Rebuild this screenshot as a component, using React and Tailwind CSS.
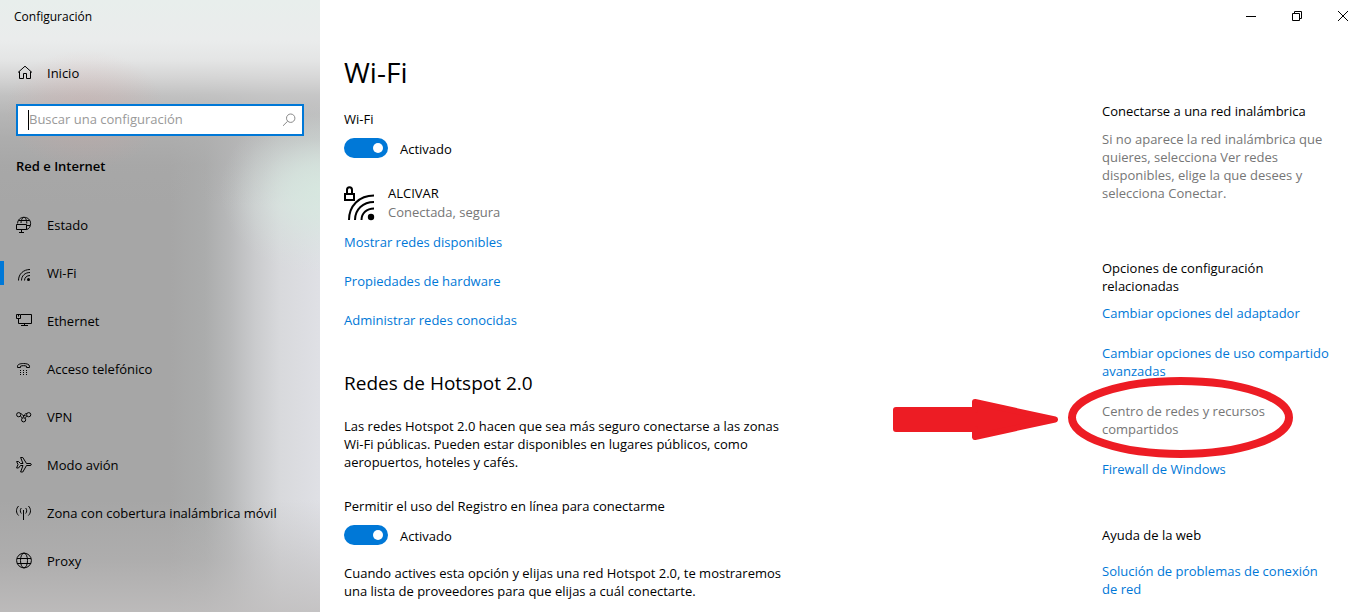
import React, { useState } from "react";

const navItems = [
  { label: "Estado", icon: StatusIcon },
  { label: "Wi-Fi", icon: WifiIcon, active: true },
  { label: "Ethernet", icon: EthernetIcon },
  { label: "Acceso telefónico", icon: DialUpIcon },
  { label: "VPN", icon: VpnIcon },
  { label: "Modo avión", icon: PlaneIcon },
  { label: "Zona con cobertura inalámbrica móvil", icon: HotspotIcon },
  { label: "Proxy", icon: GlobeIcon },
];

function Icon({ children }) {
  return (
    <svg
      viewBox="0 0 16 16"
      className="size-4 shrink-0 overflow-visible"
      fill="none"
      stroke="currentColor"
      aria-hidden="true"
    >
      {children}
    </svg>
  );
}

function HomeIcon() {
  return (
    <Icon>
      <path d="M2 7.5L9 1.2L16 7.5M3.5 6.5V13.5H7.5V8.5H10.5V13.5H14.5V6.5" />
    </Icon>
  );
}

function StatusIcon() {
  return (
    <Icon>
      <path d="M1.6 6.5C1.6 2.8 4.5 .3 8 .3C11.8 .3 14.6 3 14.6 6.5C14.6 9.8 13 12 10.5 12.6M3 3.5H13.5M10.5 8.5H14M5 6C5 3.5 6 1 7.5.4M8.5.4C10.2 1.5 10.8 4 10.8 6.5" />
      <path d="M.5 7.5H10.5V12.5H.5ZM5.5 12.5V15M3 15.5H8" />
    </Icon>
  );
}

function WifiIcon() {
  return (
    <Icon>
      <path d="M2.5 15.5C2.5 9 7.5 4.5 14 4.5M5.5 15.5C5.5 10.8 9 7.5 14 7.5M8.5 15.5C8.5 12.5 10.8 10.5 14 10.5" />
      <circle cx="12.5" cy="14.5" r="1.5" fill="currentColor" stroke="none" />
    </Icon>
  );
}

function EthernetIcon() {
  return (
    <Icon>
      <path d="M5 1.5H15.5V10.5H2.5V5.5M.5 1.5H4.5V5.5H.5ZM2.5 1.5V3.5M8.5 10.5V12.5M5 12.5H12" />
    </Icon>
  );
}

function DialUpIcon() {
  return (
    <Icon>
      <path d="M1.5 6.5V5.2C1.5 3.4 4.3 2.5 7.5 2.5S13.5 3.4 13.5 5.2V6.5H10.5V5.2C9 4.5 6 4.5 4.5 5.2V6.5Z" />
      <path d="M4 9.5H5M7 9.5H8M10 9.5H11M4 11.5H5M7 11.5H8M10 11.5H11M4 13.5H5M7 13.5H8M10 13.5H11" />
    </Icon>
  );
}

function VpnIcon() {
  return (
    <Icon>
      <circle cx="2.7" cy="5.7" r="2.1" />
      <circle cx="12.7" cy="5.7" r="2.1" />
      <circle cx="7.6" cy="10.8" r="2.1" />
      <path d="M4.5 4.5C6 4.5 7 7.8 9.5 6.5M4.5 7C5.5 7.5 5.5 8.5 6 9.2M10.8 4.5C8.5 4.5 8.8 6 7 8.2M11 7C9.5 7.5 9.8 8.5 9.3 9.4" />
    </Icon>
  );
}

function PlaneIcon() {
  return (
    <Icon>
      <path d="M.6 4.5H2.5L4.5 6.5H7L4.6.5H6.8L10.5 6.5H14C15.8 6.5 15.8 8.5 14 8.5H10.5L6.8 15H4.6L7 8.5H4.5L2.5 11H.6L2 7.5Z" />
    </Icon>
  );
}

function HotspotIcon() {
  return (
    <Icon>
      <path d="M7.5 5V15M5.3 3C4 4.5 4 7 5.3 8.5M9.7 3C11 4.5 11 7 9.7 8.5M2.6 1C-.2 3.7 -.2 7.8 2.6 10.5M12.4 1C15.2 3.7 15.2 7.8 12.4 10.5" />
    </Icon>
  );
}

function GlobeIcon() {
  return (
    <Icon>
      <circle cx="8" cy="7.5" r="7.4" />
      <ellipse cx="8" cy="7.5" rx="3.5" ry="7.4" />
      <path d="M1 5.5H15M1 10.5H15" />
    </Icon>
  );
}

function SecureWifiIcon() {
  return (
    <svg viewBox="0 0 32 36" className="h-9 w-8 shrink-0" fill="none" stroke="currentColor" strokeWidth="2" aria-hidden="true">
      <path d="M1 8H10V14H1ZM3 8V4C3 .3 8 .3 8 4V8" />
      <path d="M5 34C5 20 15 9.5 30 9.5M11 34C11 23.5 19 16 30 16M17.5 34C17.5 27.5 22.5 22.5 30 22.5" />
      <circle cx="27" cy="31" r="3.2" fill="currentColor" stroke="none" />
    </svg>
  );
}

function Toggle({ id }) {
  const [on, setOn] = useState(true);

  return (
    <div className="flex items-center gap-3">
      <input
        id={id}
        type="checkbox"
        checked={on}
        onChange={() => setOn(!on)}
        className="flex h-5 w-11 appearance-none items-center rounded-full bg-gray-500 px-[5px] before:size-[10px] before:rounded-full before:bg-white checked:justify-end checked:bg-[#0078d7]"
      />
      <label htmlFor={id} className="pt-[2px]">
        {on ? "Activado" : "Desactivado"}
      </label>
    </div>
  );
}

function TextLink({ children, className = "text-[#0078d7]" }) {
  return (
    <a href="#" className={`block ${className}`}>
      {children}
    </a>
  );
}

function Sidebar() {
  return (
    <aside className="w-80 shrink-0 bg-[#a6a6a6] bg-[radial-gradient(ellipse_100px_85px_at_320px_190px,#d6e8dfe6_0%,#d6e8dfb3_30%,#d6e8df4d_60%,#d6e8df14_85%,#d6e8df00_100%),radial-gradient(ellipse_80px_60px_at_85px_110px,#d8a09c40_0%,#d8a09c26_50%,#d8a09c00_100%),linear-gradient(to_bottom,#e8eeec_0px,#eaecec_40px,#e4e5e5_60px,#d6d6d6f5_78px,#c4c4c4eb_95px,#b8b8b8d9_115px,#b0b0b0a6_140px,#aaaaaa59_165px,#a8a8a800_205px,#b8b6b600_500px,#bab8b866_560px,#c0bebed9_612px),linear-gradient(to_right,#a6a6a6_170px,#abacac_205px,#b8b9ba_230px,#cacbcd_255px,#d8d9dc_280px,#dfe0e5_320px)]">
      <div className="px-[14px] pt-2 text-xs leading-[18px]">Configuración</div>
      <a href="#" className="mt-[38px] flex items-center gap-[15px] px-4 leading-[18px]">
        <HomeIcon />
        Inicio
      </a>
      <div className="mx-4 mt-[22px] flex h-8 items-center border-2 border-[#0078d7] bg-white pr-[6px] pl-[10px]">
        <span className="h-5 w-px bg-black" />
        <input
          type="text"
          aria-label="Buscar una configuración"
          placeholder="Buscar una configuración"
          className="min-w-0 flex-1 outline-none placeholder:text-[#999]"
        />
        <svg viewBox="0 0 14 14" className="size-[14px]" fill="none" stroke="#888" aria-hidden="true">
          <circle cx="8.7" cy="5.2" r="4.2" />
          <path d="M5.7 8.2L1 12.8" />
        </svg>
      </div>
      <h2 className="mt-[21px] px-4 leading-[18px] font-semibold">Red e Internet</h2>
      <nav className="mt-[26px]">
        {navItems.map(({ label, icon: NavIcon, active }) => (
          <a key={label} href="#" className="flex h-12 items-center">
            <span className={active ? "h-6 w-1 bg-[#0078d7]" : "h-6 w-1"} />
            <span className="flex items-center gap-[15px] pl-3">
              <NavIcon />
              <span className="pt-[2px]">{label}</span>
            </span>
          </a>
        ))}
      </nav>
    </aside>
  );
}

function WindowButtons() {
  return (
    <div className="flex h-8 justify-end gap-3">
      <button aria-label="Minimizar" className="flex w-[34px] items-center justify-center">
        <svg viewBox="0 0 10 10" className="size-[10px]" stroke="currentColor">
          <path d="M0 5.5H10" />
        </svg>
      </button>
      <button aria-label="Restaurar" className="flex w-[34px] items-center justify-center">
        <svg viewBox="0 0 10 10" className="size-[10px]" fill="none" stroke="currentColor">
          <path d="M.5 2.5H7.5V9.5H.5ZM2.5 2.5V.5H9.5V7.5H7.5" />
        </svg>
      </button>
      <button aria-label="Cerrar" className="flex w-[34px] items-center justify-center">
        <svg viewBox="0 0 10 10" className="size-[10px]" stroke="currentColor">
          <path d="M0 0L10 10M10 0L0 10" />
        </svg>
      </button>
    </div>
  );
}

// red arrow and ring drawn over the highlighted link
function Highlight() {
  return (
    <svg
      viewBox="0 0 402 82"
      className="pointer-events-none absolute -top-[26px] -left-[210px] h-[82px] w-[402px]"
      aria-hidden="true"
    >
      <path
        d="M4 34H83V26L163 43.5L83 61V53H4Z"
        fill="#ed1c24"
        stroke="#ed1c24"
        strokeWidth="6"
        strokeLinejoin="round"
      />
      <ellipse cx="288.5" cy="41.5" rx="108.5" ry="36.5" fill="none" stroke="#ed1c24" strokeWidth="8" />
    </svg>
  );
}

function WifiSettings() {
  return (
    <section className="max-w-[456px]">
      <h1 className="text-[28px] leading-9">Wi-Fi</h1>
      <p className="mt-5">Wi-Fi</p>
      <div className="mt-[10px]">
        <Toggle id="wifi" />
      </div>
      <div className="mt-[26px] flex items-end gap-3">
        <SecureWifiIcon />
        <div className="leading-[19px]">
          <p>ALCIVAR</p>
          <p className="text-[#767676]">Conectada, segura</p>
        </div>
      </div>
      <div className="mt-[11px] flex flex-col items-start gap-[21px]">
        <TextLink>Mostrar redes disponibles</TextLink>
        <TextLink>Propiedades de hardware</TextLink>
        <TextLink>Administrar redes conocidas</TextLink>
      </div>
      <h2 className="mt-[42px] text-[19px] leading-6">Redes de Hotspot 2.0</h2>
      <p className="mt-[22px]">
        Las redes Hotspot 2.0 hacen que sea más seguro conectarse a las zonas Wi-Fi públicas. Pueden
        estar disponibles en lugares públicos, como aeropuertos, hoteles y cafés.
      </p>
      <p className="mt-[26px]">Permitir el uso del Registro en línea para conectarme</p>
      <div className="mt-[10px]">
        <Toggle id="hotspot" />
      </div>
      <p className="mt-[19px]">
        Cuando actives esta opción y elijas una red Hotspot 2.0, te mostraremos una lista de
        proveedores para que elijas a cuál conectarte.
      </p>
    </section>
  );
}

function RelatedSettings() {
  return (
    <section className="w-[234px] shrink-0 pt-12">
      <h3>Conectarse a una red inalámbrica</h3>
      <p className="mt-[10px] text-[#767676]">
        Si no aparece la red inalámbrica que quieres, selecciona Ver redes disponibles, elige la que
        desees y selecciona Conectar.
      </p>
      <h3 className="mt-[57px]">Opciones de configuración relacionadas</h3>
      <div className="mt-[9px] flex flex-col gap-[22px]">
        <TextLink>Cambiar opciones del adaptador</TextLink>
        <TextLink>Cambiar opciones de uso compartido avanzadas</TextLink>
        <div className="relative">
          <TextLink className="text-[#767676]">Centro de redes y recursos compartidos</TextLink>
          <Highlight />
        </div>
        <TextLink>Firewall de Windows</TextLink>
      </div>
      <h3 className="mt-[48px]">Ayuda de la web</h3>
      <div className="mt-[18px]">
        <TextLink>Solución de problemas de conexión de red</TextLink>
      </div>
    </section>
  );
}

function App() {
  return (
    <div className="flex min-h-screen bg-white font-['Open_Sans','Noto_Sans',sans-serif] text-[13px] text-black">
      <Sidebar />
      <main className="min-w-0 flex-1 leading-[18px]">
        <WindowButtons />
        <div className="flex justify-between gap-6 px-6 pt-[22px]">
          <WifiSettings />
          <RelatedSettings />
        </div>
      </main>
    </div>
  );
}

export default App;
